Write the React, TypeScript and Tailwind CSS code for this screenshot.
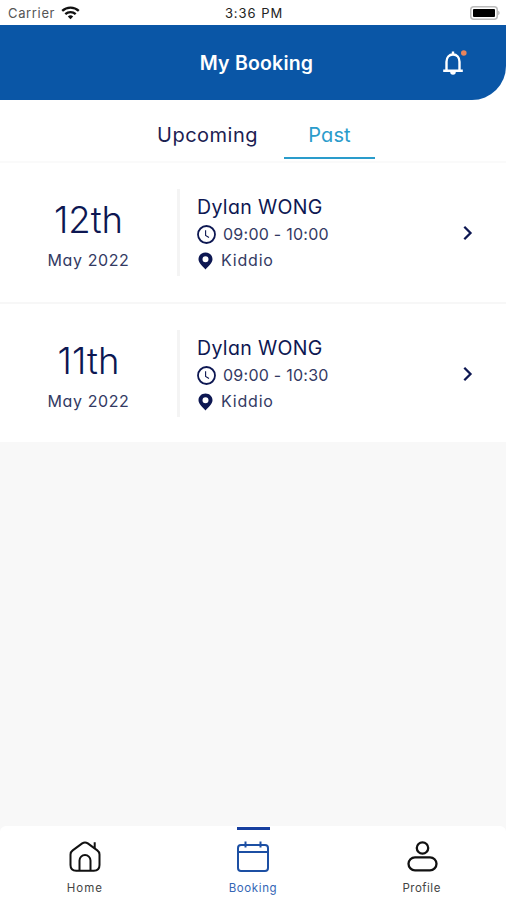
import React from 'react';

interface Booking {
    day: string;
    month: string;
    name: string;
    time: string;
    place: string;
}

const bookings: Booking[] = [
    { day: '12th', month: 'May 2022', name: 'Dylan WONG', time: '09:00 - 10:00', place: 'Kiddio' },
    { day: '11th', month: 'May 2022', name: 'Dylan WONG', time: '09:00 - 10:30', place: 'Kiddio' },
];

function StatusBar() {
    return (
        <div className="h-[25px] pt-px grid grid-cols-3 items-center pl-[8px] pr-[6px] text-[13px] text-[#333] [font-feature-settings:normal]">
            <div className="flex items-center gap-[6px] tracking-[0.65px] text-[#555]">
                <span className="pt-px">Carrier</span>
                <svg width="19" height="14" viewBox="0 0 19 14" fill="none" stroke="#111" strokeWidth="2.3">
                    <path d="M1.2 4.9a12 12 0 0 1 16.6 0" />
                    <path d="M4.3 8.2a7.6 7.6 0 0 1 10.4 0" />
                    <path d="M9.5 13.2l-2.7-2.8a4 4 0 0 1 5.4 0z" fill="#111" stroke="none" />
                </svg>
            </div>
            <div className="pt-px text-center tracking-[0.95px] text-[#222]">3:36 PM</div>
            <div className="flex justify-end">
                <svg width="30" height="14" viewBox="0 0 30 14">
                    <rect x="0.75" y="0.75" width="26.5" height="12.5" rx="3" fill="#fff" stroke="#bbb" strokeWidth="1.5" />
                    <rect x="3" y="3" width="22" height="8" rx="1" fill="#000" />
                    <path d="M28.3 4.8c1.6.6 1.6 3.8 0 4.4z" fill="#aaa" />
                </svg>
            </div>
        </div>
    );
}

function Header() {
    return (
        <header className="relative h-[75px] bg-[#0a56a6] rounded-br-[34px] flex items-center justify-center pl-[7px] pt-[3px]">
            <h1 className="text-white text-[19.5px] font-semibold tracking-[0.2px]">My Booking</h1>
            <svg className="absolute left-[441px] top-[23px]" width="26" height="30" viewBox="0 0 26 30" fill="none" stroke="#fff" strokeWidth="2.4">
                <path d="M5.5 22.2v-8.4c0-4.3 2.7-7.3 6.5-7.3s6.5 3 6.5 7.3v8.4" />
                <path d="M2.2 22.8h19.6M12 3.4v3" />
                <path d="M9.2 24h5.6a2.8 2.8 0 0 1-5.6 0z" fill="#fff" stroke="none" />
                <circle cx="22.8" cy="5" r="2.8" fill="#e8845c" stroke="none" />
            </svg>
        </header>
    );
}

function Tabs() {
    return (
        <div className="h-[63px] flex border-b-2 border-[#fafafa] text-[20px] leading-[28px] pl-[131px]">
            <button className="w-[153px] h-[59px] pt-[11px] text-[#1c2152] tracking-[0.5px]">Upcoming</button>
            <button className="w-[91px] h-[59px] pt-[13px] border-b-[2px] border-[#2a9ccb] text-[#2a9ccb] tracking-[0.1px]">Past</button>
        </div>
    );
}

function BookingRow({ booking }: { booking: Booking }) {
    return (
        <div className="flex items-start h-[141px] last:h-[138px] pt-[26px] bg-white">
            <div className="w-[177px] pt-[11px] text-center text-[#0d1752]">
                <div className="text-[36.5px] leading-[40px] font-light">{booking.day}</div>
                <div className="mt-[10px] text-[16px] leading-[20px] tracking-[0.6px] text-[#333a63]">{booking.month}</div>
            </div>
            <div className="w-[3px] h-[87px] bg-[#f4f4f4]" />
            <div className="flex-1 pl-[17px] pt-[5px] text-[#0d1752]">
                <div className="text-[19.5px] leading-[26px] tracking-[0.35px] font-normal">{booking.name}</div>
                <div className="mt-px flex items-center gap-[7px] h-[26px]">
                    <svg width="19" height="19" viewBox="0 0 19 19" fill="none" stroke="currentColor">
                        <circle cx="9.5" cy="9.5" r="8.5" strokeWidth="1.8" />
                        <path d="M8.6 5.2v5.3l3.4 2" strokeWidth="1.1" />
                    </svg>
                    <span className="text-[16px] text-[#333a63] tracking-[0.25px]">{booking.time}</span>
                </div>
                <div className="flex items-center gap-[8px] h-[26px]">
                    <svg className="ml-[1px] mt-px" width="15" height="18" viewBox="0 0 15 18" fill="currentColor">
                        <path fillRule="evenodd" d="M7.5.5C3.5.5.5 3.4.5 7.2c0 3.6 3.5 6.3 7 10.3 3.5-4 7-6.7 7-10.3C14.5 3.4 11.5.5 7.5.5zm0 3.8a3 3 0 1 1 0 6 3 3 0 0 1 0-6z" />
                    </svg>
                    <span className="text-[16px] text-[#333a63] tracking-[0.8px]">{booking.place}</span>
                </div>
            </div>
            <svg className="mr-[32px] mt-[36px]" width="12" height="16" viewBox="0 0 12 16" fill="none" stroke="#0d1752" strokeWidth="2.3">
                <path d="M2.3 1.7l6.2 6.3-6.2 6.3" />
            </svg>
        </div>
    );
}

function BottomNav() {
    return (
        <nav className="h-[74px] bg-white rounded-t-[6px] grid grid-cols-3 text-[11.5px] text-[#444]">
            <div className="flex flex-col items-center pt-[14px] pl-px">
                <svg width="34" height="34" viewBox="0 0 34 34" fill="none" stroke="#111" strokeWidth="2" strokeLinejoin="round">
                    <path d="M2.5 14.5c0-2 .7-3 2.2-4.1l9.5-7c1.9-1.3 3.7-1.3 5.6 0l9.500 7c1.5 1.1 2.2 2.1 2.2 4.1V25c0 3.5-2.2 5.7-5.7 5.7H8.2c-3.5 0-5.7-2.2-5.7-5.7z" />
                    <path d="M11.5 30.5V20.5a5.5 5.5 0 0 1 11 0v10M26.7 8V2.2" />
                </svg>
                <span className="mt-[6px] leading-[16px] tracking-[1px]">Home</span>
            </div>
            <div className="flex flex-col items-center text-[#3566b5]">
                <div className="w-[33px] h-[3px] mt-px ml-[2px] bg-[#173f9f]" />
                <svg className="mt-[10px]" width="34" height="34" viewBox="0 0 34 34" fill="none" stroke="#1c4fa3" strokeWidth="2">
                    <rect x="2" y="5" width="30" height="26" rx="3" />
                    <path d="M2 12h30M9.5 1.5v6M24.5 1.5v6" />
                </svg>
                <span className="mt-[6px] leading-[16px] tracking-[0.6px]">Booking</span>
            </div>
            <div className="flex flex-col items-center pt-[14px]">
                <svg width="34" height="34" viewBox="0 0 34 34" fill="none" stroke="#111" strokeWidth="2.3">
                    <circle cx="17.5" cy="8" r="5.7" />
                    <rect x="3.5" y="17.3" width="28" height="13" rx="6.5" />
                </svg>
                <span className="mt-[6px] leading-[16px] tracking-[0.5px]">Profile</span>
            </div>
        </nav>
    );
}

export default function App() {
    return (
        <div className="w-[506px] h-[900px] flex flex-col bg-[#f8f8f8] overflow-hidden font-['Inter',sans-serif] [font-feature-settings:'cv11']">
            <div className="bg-white">
                <StatusBar />
                <Header />
                <Tabs />
                <div className="flex flex-col divide-y-2 divide-[#f7f7f7]">
                    {bookings.map((b) => (
                        <BookingRow key={b.day} booking={b} />
                    ))}
                </div>
            </div>
            <div className="flex-1" />
            <BottomNav />
        </div>
    );
}
